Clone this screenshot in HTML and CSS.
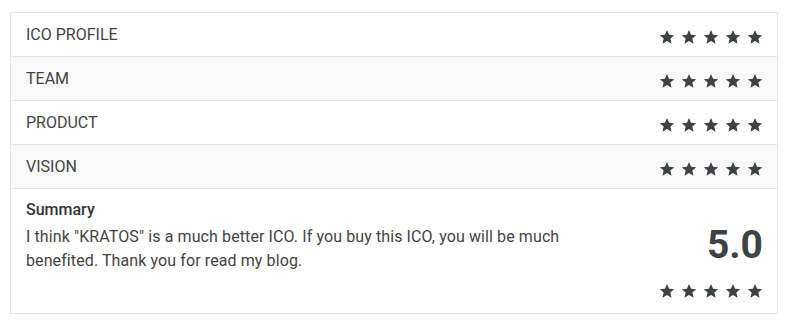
FILE: index.html
```html
<!DOCTYPE html>
<html>
<head>
<meta charset="utf-8">
<link rel="stylesheet" href="styles.css">
</head>
<body>
<svg width="0" height="0" class="defs">
  <defs>
    <symbol id="star" viewBox="0 0 24 24">
      <path d="M12 1.5l3.1 7.1 7.7.7-5.8 5.1 1.8 7.6L12 18l-6.8 4 1.8-7.6-5.8-5.1 7.7-.7z"/>
    </symbol>
  </defs>
</svg>
<div class="card">
  <div class="row">
    <span class="label">ICO PROFILE</span>
    <span class="stars"><svg><use href="#star"/></svg><svg><use href="#star"/></svg><svg><use href="#star"/></svg><svg><use href="#star"/></svg><svg><use href="#star"/></svg></span>
  </div>
  <div class="row alt">
    <span class="label">TEAM</span>
    <span class="stars"><svg><use href="#star"/></svg><svg><use href="#star"/></svg><svg><use href="#star"/></svg><svg><use href="#star"/></svg><svg><use href="#star"/></svg></span>
  </div>
  <div class="row">
    <span class="label">PRODUCT</span>
    <span class="stars"><svg><use href="#star"/></svg><svg><use href="#star"/></svg><svg><use href="#star"/></svg><svg><use href="#star"/></svg><svg><use href="#star"/></svg></span>
  </div>
  <div class="row alt">
    <span class="label">VISION</span>
    <span class="stars"><svg><use href="#star"/></svg><svg><use href="#star"/></svg><svg><use href="#star"/></svg><svg><use href="#star"/></svg><svg><use href="#star"/></svg></span>
  </div>
  <div class="summary">
    <div class="summary-text">
      <div class="summary-title">Summary</div>
      <p>I think "KRATOS" is a much better ICO. If you buy this ICO, you will be much benefited. Thank you for read my blog.</p>
    </div>
    <div class="score">
      <div class="score-value">5.0</div>
      <span class="stars"><svg><use href="#star"/></svg><svg><use href="#star"/></svg><svg><use href="#star"/></svg><svg><use href="#star"/></svg><svg><use href="#star"/></svg></span>
    </div>
  </div>
</div>
</body>
</html>
```
FILE: styles.css
```css
html, body {
  margin: 0;
  padding: 0;
  background: #fff;
}
body {
  font-family: Roboto, "Liberation Sans", sans-serif;
  color: #444;
  font-size: 16px;
}
.defs {
  position: absolute;
}
.card {
  margin: 12px 0 0 10px;
  width: 768px;
  box-sizing: border-box;
  border: 1px solid #e6e6e6;
}
.row {
  display: flex;
  justify-content: space-between;
  align-items: center;
  height: 43px;
  padding: 0 14px 0 15px;
  border-bottom: 1px solid #e6e6e6;
  background: #fff;
}
.row.alt {
  background: #f9f9f9;
}
.label {
  line-height: 20px;
}
.stars {
  display: flex;
  gap: 6px;
  margin-top: 5px;
}
.stars svg {
  width: 16px;
  height: 16px;
  fill: #3b4346;
}
.summary {
  display: flex;
  justify-content: space-between;
  padding: 10px 14px 14px 15px;
}
.summary-title {
  font-weight: 500;
  color: #333;
  line-height: 22px;
}
.summary-text p {
  margin: 4px 0 0;
  width: 570px;
  line-height: 24px;
  letter-spacing: 0.1px;
}
.score {
  display: flex;
  flex-direction: column;
  align-items: flex-end;
}
.score-value {
  font-size: 39px;
  font-weight: 700;
  color: #3b4346;
  line-height: 40px;
  margin-top: 26px;
}
.score .stars {
  margin-top: 18px;
}
```
